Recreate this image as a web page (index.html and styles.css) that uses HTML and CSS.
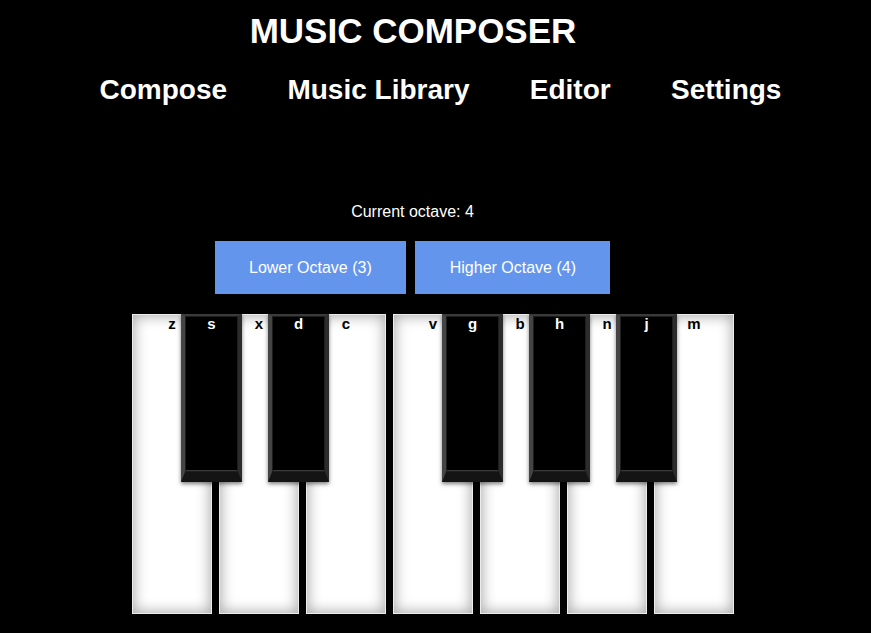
FILE: index.html
```html
<!DOCTYPE html>
<html lang="en">
<head>
<meta charset="utf-8">
<title>Music Composer</title>
<link rel="stylesheet" href="styles.css">
</head>
<body>
<header class="header">
  <h1 class="title">MUSIC COMPOSER</h1>
  <nav class="nav">
    <a class="nav-link" href="#">Compose</a>
    <a class="nav-link" href="#">Music Library</a>
    <a class="nav-link" href="#">Editor</a>
    <a class="nav-link" href="#">Settings</a>
  </nav>
</header>
<main class="composer">
  <div class="controls">
    <p class="octave">Current octave: 4</p>
    <div class="octave-buttons">
      <button class="octave-btn">Lower Octave (3)</button>
      <button class="octave-btn">Higher Octave (4)</button>
    </div>
  </div>
  <div class="piano-wrap">
    <div class="piano">
      <div class="white-key"><span class="label">z</span></div>
      <div class="white-key"><span class="label">x</span></div>
      <div class="white-key"><span class="label">c</span></div>
      <div class="white-key"><span class="label">v</span></div>
      <div class="white-key"><span class="label">b</span></div>
      <div class="white-key"><span class="label">n</span></div>
      <div class="white-key"><span class="label">m</span></div>
      <div class="black-key key-s"><span class="label">s</span></div>
      <div class="black-key key-d"><span class="label">d</span></div>
      <div class="black-key key-g"><span class="label">g</span></div>
      <div class="black-key key-h"><span class="label">h</span></div>
      <div class="black-key key-j"><span class="label">j</span></div>
    </div>
  </div>
</main>
</body>
</html>
```

FILE: styles.css
```css
html, body {
  margin: 0;
  padding: 0;
  background: #000;
}

body {
  font-family: "Liberation Sans", Arial, sans-serif;
  color: #fff;
}

.header {
  display: flex;
  flex-direction: column;
}

.title {
  margin: 0;
  padding: 11px 45px 0 0;
  font-size: 35px;
  line-height: 40px;
  font-weight: bold;
  text-align: center;
}

.nav {
  display: flex;
  justify-content: center;
  gap: 60.3px;
  margin-top: 23px;
  padding-left: 10px;
}

.nav-link {
  color: #fff;
  text-decoration: none;
  font-size: 28px;
  line-height: 32px;
  font-weight: bold;
}

.composer {
  display: flex;
  flex-direction: column;
}

.controls {
  display: flex;
  flex-direction: column;
  align-items: center;
  padding-right: 46px;
  margin-top: 97px;
}

.octave {
  margin: 0;
  font-size: 16px;
  line-height: 18px;
}

.octave-buttons {
  display: flex;
  gap: 9px;
  margin-top: 20px;
}

.octave-btn {
  border: none;
  background: #6495ed;
  color: #fff;
  font-family: "Liberation Sans", Arial, sans-serif;
  font-size: 16px;
  height: 53px;
  padding: 0 34.5px;
  line-height: 53px;
}

.piano-wrap {
  display: flex;
  justify-content: center;
  padding-right: 5px;
  margin-top: 20px;
}

.piano {
  position: relative;
  display: flex;
  gap: 7px;
}

.label {
  display: block;
  text-align: center;
  font-size: 15px;
  line-height: 18px;
  font-weight: bold;
}

.white-key {
  box-sizing: border-box;
  width: 80px;
  height: 300px;
  background: #fff;
  border: 1px solid #ececec;
  box-shadow: inset 0 0 14px 1px #a8a8a8;
  color: #000;
}

.black-key {
  position: absolute;
  top: 0;
  box-sizing: border-box;
  width: 61px;
  height: 168px;
  background: #000;
  border-style: solid;
  border-width: 2px 4px 10px 4px;
  border-color: #3a3a3a #2c2c2c #141414 #444;
  box-shadow: inset 0 0 0 1px #1e1e1e, inset 0 -1px 0 1px #3a3a3a, 0 2px 4px rgba(0, 0, 0, 0.5);
  color: #fff;
}

.black-key .label {
  margin-top: -1px;
}

.key-s { left: 49px; }
.key-d { left: 136px; }
.key-g { left: 310px; }
.key-h { left: 397px; }
.key-j { left: 484px; }
```
